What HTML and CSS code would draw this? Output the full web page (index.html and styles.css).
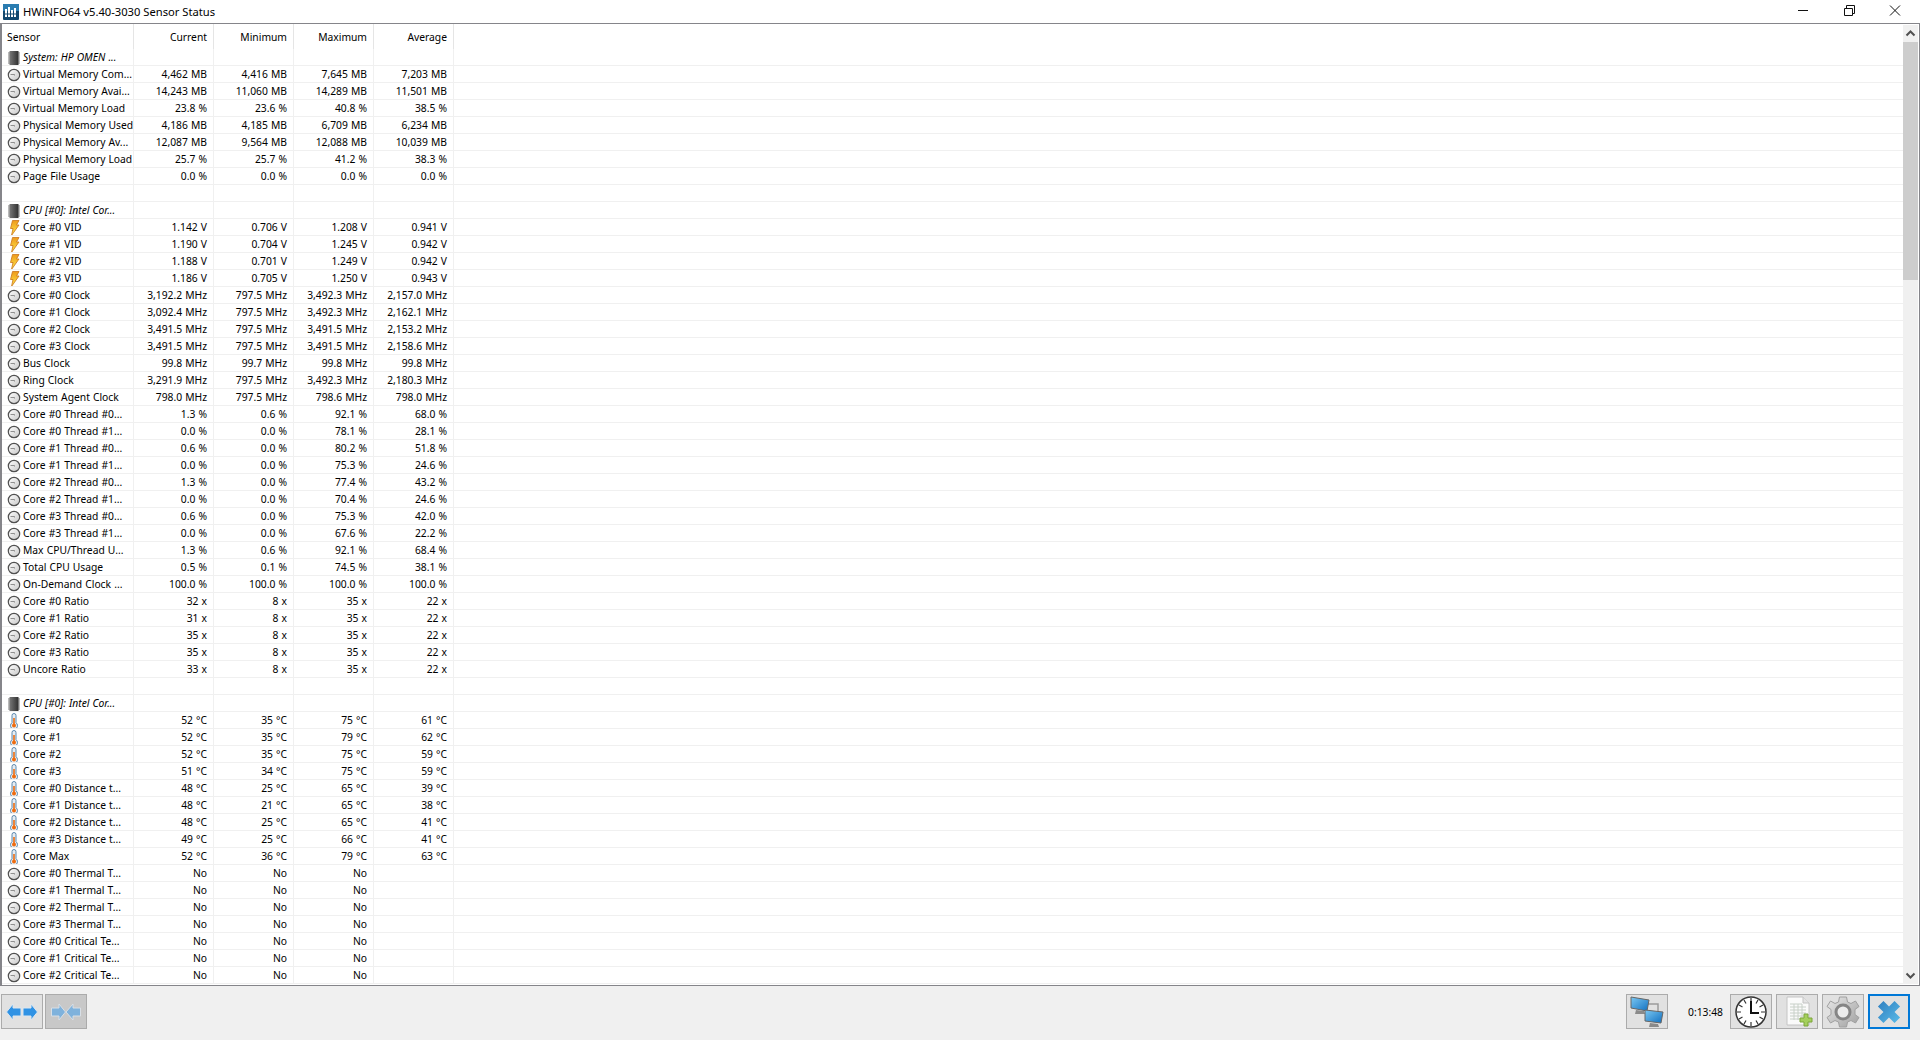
FILE: index.html
```html
<!DOCTYPE html>
<html lang="en">
<head>
  <meta charset="UTF-8">
  <title>HWiNFO64 v5.40-3030 Sensor Status</title>
  <link rel="stylesheet" href="styles.css">
</head>
<body>

  <svg class="defs" width="0" height="0">
    <defs>
      <linearGradient id="face" x1="0" y1="0" x2="1" y2="1">
        <stop offset="0" stop-color="#fff"/><stop offset="1" stop-color="#c8c8c8"/>
      </linearGradient>
      <linearGradient id="chipfill" x1="0" y1="0" x2="1" y2="0">
        <stop offset="0" stop-color="#777"/><stop offset="1" stop-color="#303030"/>
      </linearGradient>
      <linearGradient id="boltfill" x1="0" y1="0" x2="0" y2="1">
        <stop offset="0" stop-color="#ee9a1c"/><stop offset="1" stop-color="#ffea4a"/>
      </linearGradient>
      <linearGradient id="screen" x1="0" y1="0" x2="1" y2="1">
        <stop offset="0" stop-color="#7cc8f2"/><stop offset="1" stop-color="#0f6fc0"/>
      </linearGradient>
      <linearGradient id="xfill" x1="0" y1="0" x2="1" y2="1">
        <stop offset="0" stop-color="#2f7fc0"/><stop offset="1" stop-color="#5abbe8"/>
      </linearGradient>
      <linearGradient id="gearfill" x1="0" y1="0" x2="1" y2="1">
        <stop offset="0" stop-color="#e8e8e8"/><stop offset="1" stop-color="#a0a0a0"/>
      </linearGradient>
      <symbol id="gauge" viewBox="0 0 14 16">
        <circle cx="7" cy="8" r="5.7" fill="url(#face)" stroke="#505050" stroke-width="1.2"/>
        <path d="M3.500 7.500H7.500V8.500" fill="none" stroke="#777" stroke-width=".8"/>
      </symbol>
      <symbol id="bolt" viewBox="0 0 14 16">
        <path d="M5.500 .5H12L9.500 5H12L4.500 15.500L6 8.500H3.500Z" fill="url(#boltfill)" stroke="#c9731a" stroke-width=".8"/>
      </symbol>
      <symbol id="thermo" viewBox="0 0 14 16">
        <path d="M5 2.500a2 2 0 0 1 4 0V9.800a3.500 3.500 0 1 1-4 0Z" fill="#e6edf3" stroke="#5b88ad" stroke-width="1"/>
        <path d="M7 5V11" stroke="#ee6c10" stroke-width="1.600" fill="none"/>
        <circle cx="7" cy="12.500" r="2" fill="#ee6c10"/>
      </symbol>
      <symbol id="chip" viewBox="0 0 14 16">
        <path d="M1 3H13M1 5H13M1 7H13M1 9H13M1 11H13M1 13H13" stroke="#777" stroke-width="1"/>
        <rect x="2.500" y="1" width="9" height="14" fill="url(#chipfill)"/>
      </symbol>
    </defs>
  </svg>

  <div class="titlebar">
    <svg class="app-icon" width="16" height="16" viewBox="0 0 16 16">
      <rect width="16" height="16" rx="1" fill="#12496f"/>
      <rect x="0" y="0" width="16" height="7" fill="#2a7cb0"/>
      <path d="M3 5V13M6 3V13M9 6V13M12 4V13" stroke="#fff" stroke-width="2"/>
      <path d="M1 10H15" stroke="#12496f" stroke-width="1"/>
    </svg>
    <span class="app-title">HWiNFO64 v5.40-3030 Sensor Status</span>
    <div class="win-controls">
      <svg width="46" height="23" viewBox="0 0 46 23"><path d="M18 10.500H28" stroke="#111"/></svg>
      <svg width="46" height="23" viewBox="0 0 46 23"><path d="M18.500 8.500H26.500V15.500H18.500ZM20.500 8.500V5.500H28.500V13.500H26.500" fill="none" stroke="#111"/></svg>
      <svg width="46" height="23" viewBox="0 0 46 23"><path d="M18 5.500L28 15.500M28 5.500L18 15.500" stroke="#111"/></svg>
    </div>
  </div>

  <div class="sensor-frame">
    <div class="sensor-list">
      <table class="sensors">
        <thead>
          <tr><th class="name">Sensor</th><th>Current</th><th>Minimum</th><th>Maximum</th><th>Average</th><th class="rest"></th></tr>
        </thead>
        <tbody>
          <tr class="group"><td class="name"><svg class="ico"><use href="#chip"/></svg>System: HP OMEN ...</td><td></td><td></td><td></td><td></td><td class="rest"></td></tr>
          <tr><td class="name"><svg class="ico"><use href="#gauge"/></svg>Virtual Memory Com...</td><td>4,462 MB</td><td>4,416 MB</td><td>7,645 MB</td><td>7,203 MB</td><td class="rest"></td></tr>
          <tr><td class="name"><svg class="ico"><use href="#gauge"/></svg>Virtual Memory Avai...</td><td>14,243 MB</td><td>11,060 MB</td><td>14,289 MB</td><td>11,501 MB</td><td class="rest"></td></tr>
          <tr><td class="name"><svg class="ico"><use href="#gauge"/></svg>Virtual Memory Load</td><td>23.8 %</td><td>23.6 %</td><td>40.8 %</td><td>38.5 %</td><td class="rest"></td></tr>
          <tr><td class="name"><svg class="ico"><use href="#gauge"/></svg>Physical Memory Used</td><td>4,186 MB</td><td>4,185 MB</td><td>6,709 MB</td><td>6,234 MB</td><td class="rest"></td></tr>
          <tr><td class="name"><svg class="ico"><use href="#gauge"/></svg>Physical Memory Av...</td><td>12,087 MB</td><td>9,564 MB</td><td>12,088 MB</td><td>10,039 MB</td><td class="rest"></td></tr>
          <tr><td class="name"><svg class="ico"><use href="#gauge"/></svg>Physical Memory Load</td><td>25.7 %</td><td>25.7 %</td><td>41.2 %</td><td>38.3 %</td><td class="rest"></td></tr>
          <tr><td class="name"><svg class="ico"><use href="#gauge"/></svg>Page File Usage</td><td>0.0 %</td><td>0.0 %</td><td>0.0 %</td><td>0.0 %</td><td class="rest"></td></tr>
          <tr><td class="name"></td><td></td><td></td><td></td><td></td><td class="rest"></td></tr>
          <tr class="group"><td class="name"><svg class="ico"><use href="#chip"/></svg>CPU [#0]: Intel Cor...</td><td></td><td></td><td></td><td></td><td class="rest"></td></tr>
          <tr><td class="name"><svg class="ico"><use href="#bolt"/></svg>Core #0 VID</td><td>1.142 V</td><td>0.706 V</td><td>1.208 V</td><td>0.941 V</td><td class="rest"></td></tr>
          <tr><td class="name"><svg class="ico"><use href="#bolt"/></svg>Core #1 VID</td><td>1.190 V</td><td>0.704 V</td><td>1.245 V</td><td>0.942 V</td><td class="rest"></td></tr>
          <tr><td class="name"><svg class="ico"><use href="#bolt"/></svg>Core #2 VID</td><td>1.188 V</td><td>0.701 V</td><td>1.249 V</td><td>0.942 V</td><td class="rest"></td></tr>
          <tr><td class="name"><svg class="ico"><use href="#bolt"/></svg>Core #3 VID</td><td>1.186 V</td><td>0.705 V</td><td>1.250 V</td><td>0.943 V</td><td class="rest"></td></tr>
          <tr><td class="name"><svg class="ico"><use href="#gauge"/></svg>Core #0 Clock</td><td>3,192.2 MHz</td><td>797.5 MHz</td><td>3,492.3 MHz</td><td>2,157.0 MHz</td><td class="rest"></td></tr>
          <tr><td class="name"><svg class="ico"><use href="#gauge"/></svg>Core #1 Clock</td><td>3,092.4 MHz</td><td>797.5 MHz</td><td>3,492.3 MHz</td><td>2,162.1 MHz</td><td class="rest"></td></tr>
          <tr><td class="name"><svg class="ico"><use href="#gauge"/></svg>Core #2 Clock</td><td>3,491.5 MHz</td><td>797.5 MHz</td><td>3,491.5 MHz</td><td>2,153.2 MHz</td><td class="rest"></td></tr>
          <tr><td class="name"><svg class="ico"><use href="#gauge"/></svg>Core #3 Clock</td><td>3,491.5 MHz</td><td>797.5 MHz</td><td>3,491.5 MHz</td><td>2,158.6 MHz</td><td class="rest"></td></tr>
          <tr><td class="name"><svg class="ico"><use href="#gauge"/></svg>Bus Clock</td><td>99.8 MHz</td><td>99.7 MHz</td><td>99.8 MHz</td><td>99.8 MHz</td><td class="rest"></td></tr>
          <tr><td class="name"><svg class="ico"><use href="#gauge"/></svg>Ring Clock</td><td>3,291.9 MHz</td><td>797.5 MHz</td><td>3,492.3 MHz</td><td>2,180.3 MHz</td><td class="rest"></td></tr>
          <tr><td class="name"><svg class="ico"><use href="#gauge"/></svg>System Agent Clock</td><td>798.0 MHz</td><td>797.5 MHz</td><td>798.6 MHz</td><td>798.0 MHz</td><td class="rest"></td></tr>
          <tr><td class="name"><svg class="ico"><use href="#gauge"/></svg>Core #0 Thread #0...</td><td>1.3 %</td><td>0.6 %</td><td>92.1 %</td><td>68.0 %</td><td class="rest"></td></tr>
          <tr><td class="name"><svg class="ico"><use href="#gauge"/></svg>Core #0 Thread #1...</td><td>0.0 %</td><td>0.0 %</td><td>78.1 %</td><td>28.1 %</td><td class="rest"></td></tr>
          <tr><td class="name"><svg class="ico"><use href="#gauge"/></svg>Core #1 Thread #0...</td><td>0.6 %</td><td>0.0 %</td><td>80.2 %</td><td>51.8 %</td><td class="rest"></td></tr>
          <tr><td class="name"><svg class="ico"><use href="#gauge"/></svg>Core #1 Thread #1...</td><td>0.0 %</td><td>0.0 %</td><td>75.3 %</td><td>24.6 %</td><td class="rest"></td></tr>
          <tr><td class="name"><svg class="ico"><use href="#gauge"/></svg>Core #2 Thread #0...</td><td>1.3 %</td><td>0.0 %</td><td>77.4 %</td><td>43.2 %</td><td class="rest"></td></tr>
          <tr><td class="name"><svg class="ico"><use href="#gauge"/></svg>Core #2 Thread #1...</td><td>0.0 %</td><td>0.0 %</td><td>70.4 %</td><td>24.6 %</td><td class="rest"></td></tr>
          <tr><td class="name"><svg class="ico"><use href="#gauge"/></svg>Core #3 Thread #0...</td><td>0.6 %</td><td>0.0 %</td><td>75.3 %</td><td>42.0 %</td><td class="rest"></td></tr>
          <tr><td class="name"><svg class="ico"><use href="#gauge"/></svg>Core #3 Thread #1...</td><td>0.0 %</td><td>0.0 %</td><td>67.6 %</td><td>22.2 %</td><td class="rest"></td></tr>
          <tr><td class="name"><svg class="ico"><use href="#gauge"/></svg>Max CPU/Thread U...</td><td>1.3 %</td><td>0.6 %</td><td>92.1 %</td><td>68.4 %</td><td class="rest"></td></tr>
          <tr><td class="name"><svg class="ico"><use href="#gauge"/></svg>Total CPU Usage</td><td>0.5 %</td><td>0.1 %</td><td>74.5 %</td><td>38.1 %</td><td class="rest"></td></tr>
          <tr><td class="name"><svg class="ico"><use href="#gauge"/></svg>On-Demand Clock ...</td><td>100.0 %</td><td>100.0 %</td><td>100.0 %</td><td>100.0 %</td><td class="rest"></td></tr>
          <tr><td class="name"><svg class="ico"><use href="#gauge"/></svg>Core #0 Ratio</td><td>32 x</td><td>8 x</td><td>35 x</td><td>22 x</td><td class="rest"></td></tr>
          <tr><td class="name"><svg class="ico"><use href="#gauge"/></svg>Core #1 Ratio</td><td>31 x</td><td>8 x</td><td>35 x</td><td>22 x</td><td class="rest"></td></tr>
          <tr><td class="name"><svg class="ico"><use href="#gauge"/></svg>Core #2 Ratio</td><td>35 x</td><td>8 x</td><td>35 x</td><td>22 x</td><td class="rest"></td></tr>
          <tr><td class="name"><svg class="ico"><use href="#gauge"/></svg>Core #3 Ratio</td><td>35 x</td><td>8 x</td><td>35 x</td><td>22 x</td><td class="rest"></td></tr>
          <tr><td class="name"><svg class="ico"><use href="#gauge"/></svg>Uncore Ratio</td><td>33 x</td><td>8 x</td><td>35 x</td><td>22 x</td><td class="rest"></td></tr>
          <tr><td class="name"></td><td></td><td></td><td></td><td></td><td class="rest"></td></tr>
          <tr class="group"><td class="name"><svg class="ico"><use href="#chip"/></svg>CPU [#0]: Intel Cor...</td><td></td><td></td><td></td><td></td><td class="rest"></td></tr>
          <tr><td class="name"><svg class="ico"><use href="#thermo"/></svg>Core #0</td><td>52 °C</td><td>35 °C</td><td>75 °C</td><td>61 °C</td><td class="rest"></td></tr>
          <tr><td class="name"><svg class="ico"><use href="#thermo"/></svg>Core #1</td><td>52 °C</td><td>35 °C</td><td>79 °C</td><td>62 °C</td><td class="rest"></td></tr>
          <tr><td class="name"><svg class="ico"><use href="#thermo"/></svg>Core #2</td><td>52 °C</td><td>35 °C</td><td>75 °C</td><td>59 °C</td><td class="rest"></td></tr>
          <tr><td class="name"><svg class="ico"><use href="#thermo"/></svg>Core #3</td><td>51 °C</td><td>34 °C</td><td>75 °C</td><td>59 °C</td><td class="rest"></td></tr>
          <tr><td class="name"><svg class="ico"><use href="#thermo"/></svg>Core #0 Distance t...</td><td>48 °C</td><td>25 °C</td><td>65 °C</td><td>39 °C</td><td class="rest"></td></tr>
          <tr><td class="name"><svg class="ico"><use href="#thermo"/></svg>Core #1 Distance t...</td><td>48 °C</td><td>21 °C</td><td>65 °C</td><td>38 °C</td><td class="rest"></td></tr>
          <tr><td class="name"><svg class="ico"><use href="#thermo"/></svg>Core #2 Distance t...</td><td>48 °C</td><td>25 °C</td><td>65 °C</td><td>41 °C</td><td class="rest"></td></tr>
          <tr><td class="name"><svg class="ico"><use href="#thermo"/></svg>Core #3 Distance t...</td><td>49 °C</td><td>25 °C</td><td>66 °C</td><td>41 °C</td><td class="rest"></td></tr>
          <tr><td class="name"><svg class="ico"><use href="#thermo"/></svg>Core Max</td><td>52 °C</td><td>36 °C</td><td>79 °C</td><td>63 °C</td><td class="rest"></td></tr>
          <tr><td class="name"><svg class="ico"><use href="#gauge"/></svg>Core #0 Thermal T...</td><td>No</td><td>No</td><td>No</td><td></td><td class="rest"></td></tr>
          <tr><td class="name"><svg class="ico"><use href="#gauge"/></svg>Core #1 Thermal T...</td><td>No</td><td>No</td><td>No</td><td></td><td class="rest"></td></tr>
          <tr><td class="name"><svg class="ico"><use href="#gauge"/></svg>Core #2 Thermal T...</td><td>No</td><td>No</td><td>No</td><td></td><td class="rest"></td></tr>
          <tr><td class="name"><svg class="ico"><use href="#gauge"/></svg>Core #3 Thermal T...</td><td>No</td><td>No</td><td>No</td><td></td><td class="rest"></td></tr>
          <tr><td class="name"><svg class="ico"><use href="#gauge"/></svg>Core #0 Critical Te...</td><td>No</td><td>No</td><td>No</td><td></td><td class="rest"></td></tr>
          <tr><td class="name"><svg class="ico"><use href="#gauge"/></svg>Core #1 Critical Te...</td><td>No</td><td>No</td><td>No</td><td></td><td class="rest"></td></tr>
          <tr><td class="name"><svg class="ico"><use href="#gauge"/></svg>Core #2 Critical Te...</td><td>No</td><td>No</td><td>No</td><td></td><td class="rest"></td></tr>
        </tbody>
      </table>
    </div>
    <div class="scrollbar">
      <div class="scroll-btn"><svg width="15" height="17" viewBox="0 0 15 17"><path d="M3.500 10.500L7.500 6.500L11.500 10.500" fill="none" stroke="#505050" stroke-width="2"/></svg></div>
      <div class="scroll-track"><div class="scroll-thumb"></div></div>
      <div class="scroll-btn"><svg width="15" height="17" viewBox="0 0 15 17"><path d="M3.500 6.500L7.500 10.500L11.500 6.500" fill="none" stroke="#505050" stroke-width="2"/></svg></div>
    </div>
  </div>

  <div class="toolbar">
    <div class="tool-group nav">
      <div class="tool-btn">
        <svg width="32" height="18" viewBox="0 0 32 18">
          <path d="M.5 9L7 1V5H15V13H7V17Z" fill="#2f92e4" stroke="#dbe6f0"/>
          <path d="M31.500 9L25 1V5H17V13H25V17Z" fill="#2f92e4" stroke="#dbe6f0"/>
        </svg>
      </div>
      <div class="tool-btn pressed">
        <svg width="30" height="18" viewBox="0 0 30 18">
          <path d="M14.500 9L8 1V5H.5V13H8V17Z" fill="#7fb2dc" stroke="#d8dfe6"/>
          <path d="M15 9L22 1V5H29.500V13H22V17Z" fill="#7fb2dc" stroke="#d8dfe6"/>
        </svg>
      </div>
    </div>
    <div class="tool-group">
      <div class="tool-btn">
        <svg width="34" height="32" viewBox="0 0 34 32">
          <path d="M17 8H28V18" fill="none" stroke="#9a9a9a" stroke-width="1.500"/>
          <path d="M1 1L19 4L17 15L1 12Z" fill="url(#screen)" stroke="#666"/>
          <path d="M6 14L14 15L15 18H5Z" fill="#8a8a8a"/>
          <path d="M15 14L33 16L31 27L15 25Z" fill="url(#screen)" stroke="#666"/>
          <path d="M20 27L28 28L29 31H19Z" fill="#8a8a8a"/>
        </svg>
      </div>
      <span class="timer">0:13:48</span>
      <div class="tool-btn">
        <svg width="34" height="34" viewBox="0 0 34 34">
          <circle cx="17" cy="17" r="15" fill="#fff" stroke="#333" stroke-width="1.500"/>
          <path d="M17 3V7M17 27V31M3 17H7M27 17H31M10 5L12 8.500M24 5L22 8.500M10 29L12 25.500M24 29L22 25.500M5 10L8.500 12M29 10L25.500 12M5 24L8.500 22M29 24L25.500 22" stroke="#333" stroke-width="1.200"/>
          <path d="M17 6V18H25" fill="none" stroke="#111" stroke-width="2"/>
        </svg>
      </div>
      <div class="tool-btn">
        <svg width="36" height="34" viewBox="0 0 36 34">
          <path d="M8 2H24L30 8V30H8Z" fill="#fafafa" stroke="#c4c4c4"/>
          <path d="M24 2V8H30" fill="#e4e4e4" stroke="#c4c4c4"/>
          <path d="M11 9H23M11 12H27M11 15H27M11 18H27M11 21H27M11 24H27M15 9V25M19 9V25M23 9V25" stroke="#c8d0c8"/>
          <path d="M25 19H29V23H33V27H29V31H25V27H21V23H25Z" fill="#a4cf5c" stroke="#7da53a"/>
        </svg>
      </div>
      <div class="tool-btn">
        <svg width="34" height="32" viewBox="0 0 34 32">
          <path d="M13.500 1H20.500L21.500 6L25 7.500L29.500 5L33 10.500L29 13.500V18.500L33 21.500L29.500 27L25 24.500L21.500 26L20.500 31H13.500L12.500 26L9 24.500L4.500 27L1 21.500L5 18.500V13.500L1 10.500L4.500 5L9 7.500L12.500 6Z" fill="url(#gearfill)" stroke="#a0a0a0"/>
          <circle cx="17" cy="16" r="7" fill="#ececec" stroke="#858585" stroke-width="3"/>
        </svg>
      </div>
      <div class="tool-btn close-btn">
        <svg width="24" height="24" viewBox="0 0 26 26">
          <path d="M7 1L13 7L19 1L25 7L19 13L25 19L19 25L13 19L7 25L1 19L7 13L1 7Z" fill="url(#xfill)"/>
        </svg>
      </div>
    </div>
  </div>

</body>
</html>
```
FILE: styles.css
```css
html, body {
  height: 100%;
}

body {
  margin: 0;
  display: flex;
  flex-direction: column;
  overflow: hidden;
  background-color: #f0f0f0;
  color: #000;
  font-family: "Noto Sans", sans-serif;
  font-size: 10.3px;
  word-spacing: 0.4px;
}

.defs {
  position: absolute;
}

.titlebar {
  display: flex;
  align-items: center;
  height: 23px;
  background-color: #fff;
  padding-left: 3px;
}

.app-icon {
  margin-right: 4px;
}

.app-title {
  font-size: 11.2px;
  word-spacing: 0;
}

.win-controls {
  display: flex;
  margin-left: auto;
  margin-right: 2px;
}

.sensor-frame {
  display: flex;
  height: 963px;
  box-sizing: border-box;
  border: 1px solid #85858a;
  border-left-width: 2px;
  background-color: #fff;
}

.sensor-list {
  flex: 1;
  overflow: hidden;
}

.sensors {
  width: 100%;
  table-layout: fixed;
  border-collapse: separate;
  border-spacing: 0;
}

.sensors th,
.sensors td {
  width: 80px;
  height: 17px;
  box-sizing: border-box;
  padding: 1px 6px 0 0;
  text-align: right;
  font-weight: normal;
  white-space: nowrap;
  overflow: hidden;
  line-height: 15px;
  border-right: 1px solid #f0f0f0;
  border-bottom: 1px solid #f0f0f0;
}

.sensors th {
  height: 25px;
  border-bottom: none;
  border-right-color: #e5e5e5;
}

.sensors .name {
  width: 132px;
  padding: 1px 0 0 5px;
  text-align: left;
}

.sensors .rest {
  width: auto;
  border-right: none;
}

.group .name {
  font-style: italic;
}

.ico {
  width: 14px;
  height: 16px;
  margin: -1px 2px -1px 0;
  vertical-align: -4px;
}

.scrollbar {
  display: flex;
  flex-direction: column;
  flex-shrink: 0;
  width: 15px;
  margin: 1px 1px 1px 0;
  background-color: #f0f0f0;
}

.scroll-btn {
  height: 17px;
}

.scroll-track {
  flex: 1;
}

.scroll-thumb {
  height: 238px;
  background-color: #cdcdcd;
}

.toolbar {
  display: flex;
  justify-content: space-between;
  padding: 8px 10px 0 1px;
}

.tool-group {
  display: flex;
  align-items: center;
  align-self: flex-start;
  gap: 4px;
}

.tool-group.nav {
  gap: 2px;
}

.tool-btn {
  display: flex;
  align-items: center;
  justify-content: center;
  width: 42px;
  height: 35px;
  box-sizing: border-box;
  border: 1px solid #ababab;
  background-color: #e1e1e1;
}

.tool-btn.pressed {
  background-color: #c8c8c8;
}

.close-btn {
  border: 2px solid #0078d7;
}

.timer {
  width: 54px;
  text-align: right;
  padding-right: 3px;
  box-sizing: border-box;
}
```
